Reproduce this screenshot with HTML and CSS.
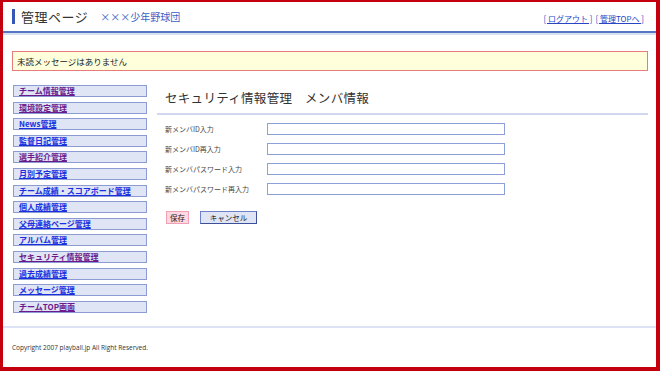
FILE: index.html
```html
<!DOCTYPE html>
<html lang="ja">
<head>
<meta charset="utf-8">
<link rel="stylesheet" href="styles.css">
</head>
<body>
<div class="frame">
  <header class="header">
    <div class="brand">
      <span class="brand-bar"></span>
      <span class="brand-title">管理ページ</span>
      <span class="brand-team">×××少年野球団</span>
    </div>
    <nav class="toplinks">
      <a href="#">[ ログアウト ]</a>
      <a href="#">[ 管理TOPへ ]</a>
    </nav>
  </header>
  <div class="header-rule"></div>
  <div class="notice">未読メッセージはありません</div>
  <div class="main">
    <ul class="sidenav">
      <li><a class="v" href="#">チーム情報管理</a></li>
      <li><a class="v" href="#">環境設定管理</a></li>
      <li><a href="#">News管理</a></li>
      <li><a href="#">監督日記管理</a></li>
      <li><a class="v" href="#">選手紹介管理</a></li>
      <li><a href="#">月別予定管理</a></li>
      <li><a href="#">チーム成績・スコアボード管理</a></li>
      <li><a href="#">個人成績管理</a></li>
      <li><a href="#">父母連絡ページ管理</a></li>
      <li><a href="#">アルバム管理</a></li>
      <li><a class="v" href="#">セキュリティ情報管理</a></li>
      <li><a href="#">過去成績管理</a></li>
      <li><a href="#">メッセージ管理</a></li>
      <li><a class="v" href="#">チームTOP画面</a></li>
    </ul>
    <section class="content">
      <h1 class="page-title">セキュリティ情報管理　メンバ情報</h1>
      <div class="form">
        <div class="row"><label>新メンバID入力</label><input type="text"></div>
        <div class="row"><label>新メンバID再入力</label><input type="text"></div>
        <div class="row"><label>新メンバパスワード入力</label><input type="text"></div>
        <div class="row"><label>新メンバパスワード再入力</label><input type="text"></div>
      </div>
      <div class="buttons">
        <button class="btn-save">保存</button>
        <button class="btn-cancel">キャンセル</button>
      </div>
    </section>
  </div>
  <footer class="footer">Copyright 2007 playball.jp All Right Reserved.</footer>
</div>
</body>
</html>
```
FILE: styles.css
```css
* { box-sizing: border-box; }
html, body { margin: 0; padding: 0; background: #fff; }
body { font-family: "Noto Sans CJK JP", "Liberation Sans", sans-serif; color: #333; }
.frame {
  width: 660px; height: 371px;
  border-style: solid; border-color: #c4000e;
  border-width: 2px 4px 4px 3px;
  display: flex; flex-direction: column;
}
.header {
  height: 29px;
  display: flex; align-items: center; justify-content: space-between;
  padding: 0 12px 0 9px;
}
.brand { display: flex; align-items: center; }
.brand-bar { width: 3px; height: 15px; background: #3657b5; margin-right: 6px; }
.brand-title { font-size: 13px; color: #333; margin-right: 12px; letter-spacing: 0.5px; }
.brand-team { font-size: 10px; color: #3a5fc8; }
.toplinks { font-size: 8px; display: flex; gap: 3px; margin-top: 3px; }
.toplinks a { color: #2845c6; text-decoration: underline; }
.header-rule { height: 4px; border-top: 2px solid #5576c4; background: #d8e0f2; }
.notice {
  margin: 16px 8px 0 9px;
  height: 20px;
  border: 1px solid #e87c7c;
  background: #ffffdc;
  font-size: 8.5px; color: #222;
  display: flex; align-items: center;
  padding-left: 4px;
}
.main { display: flex; margin-top: 14px; flex: 1; }
.sidenav {
  list-style: none; margin: 0; padding: 0 0 0 10px;
  width: 154px;
  display: flex; flex-direction: column; gap: 4.6px;
}
.sidenav li {
  width: 134px; height: 12px;
  background: #dfe5f5;
  border: 1px solid #8c9bd3;
  display: flex; align-items: center;
  padding-left: 5px;
}
.sidenav a {
  font-size: 8px; font-weight: bold; color: #1a2fe0;
  text-decoration: underline; line-height: 1;
}
.sidenav a.v { color: #6b1a8c; }
.content { flex: 1; margin-right: 8px; }
.page-title {
  margin: 0; font-weight: normal; font-size: 12.5px; color: #333;
  padding: 3px 0 6px 8px;
  border-bottom: 2px solid #cfd8ef;
  letter-spacing: 0.3px;
}
.form { padding: 7px 0 0 8px; display: flex; flex-direction: column; gap: 7px; }
.row { display: flex; align-items: center; height: 13px; }
.row label { width: 102px; font-size: 7px; color: #444; }
.row input {
  width: 238px; height: 12px;
  border: 1px solid #8ea0d8; padding: 0; margin: 0;
  background: #fff;
}
.buttons { padding: 16px 0 0 9px; display: flex; gap: 11px; }
.buttons button {
  font-family: inherit; font-size: 7.5px; color: #222;
  height: 13px; padding: 0; margin: 0; line-height: 1;
}
.btn-save { width: 23px; background: #ffd8e2; border: 1px solid #f0a0b4; }
.btn-cancel { width: 57px; background: #dfe5f5; border: 1px solid #6d80c8; border-right-color: #3b4f9a; border-bottom-color: #3b4f9a; }
.footer {
  border-top: 2px solid #dde3f4;
  height: 41px;
  font-family: "Open Sans", "Liberation Sans", sans-serif;
  font-size: 6.5px; color: #333;
  display: flex; align-items: center;
  padding-left: 9px;
  margin-top: auto;
}
```
